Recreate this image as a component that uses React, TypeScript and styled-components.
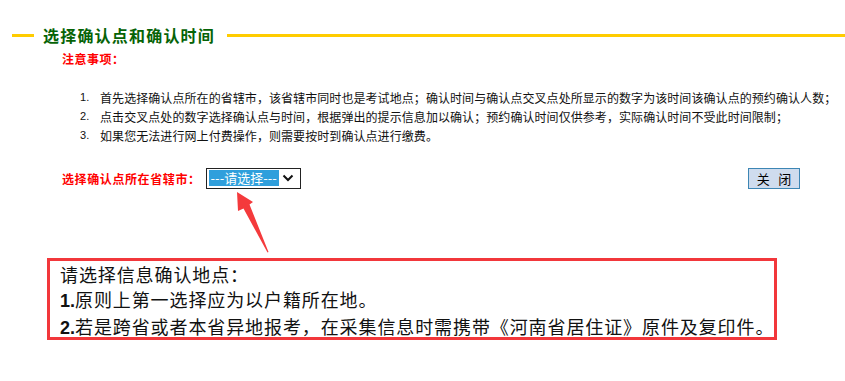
import React from "react";
import styled, { createGlobalStyle } from "styled-components";

const Global = createGlobalStyle`
  html, body { margin: 0; padding: 0; background: #fff; }
  body { font-family: "Noto Sans CJK SC", "Liberation Sans", sans-serif; color: #000; }
`;

const Page = styled.div`
  width: 845px;
  height: 381px;
  overflow: hidden;
  display: flex;
  flex-direction: column;
`;

const Header = styled.div`
  display: flex;
  align-items: center;
  height: 18px;
  margin-top: 26px;
`;

const Rule = styled.div<{ $w?: number }>`
  height: 3px;
  background: #ffcc00;
  ${(p) => (p.$w ? `width: ${p.$w}px;` : "flex: 1;")}
`;

const Title = styled.h2`
  margin: 0 12px 0 9px;
  font-size: 16px;
  line-height: 18px;
  font-weight: bold;
  letter-spacing: 1.2px;
  color: #066306;
`;

const Notice = styled.div`
  margin: 7px 0 0 62px;
  font-size: 12px;
  line-height: 16px;
  font-weight: bold;
  color: #f00;
  letter-spacing: 0.5px;
`;

const List = styled.ol`
  margin: 21px 0 0 0;
  padding: 0 0 0 80px;
  list-style: none;
  display: flex;
  flex-direction: column;
`;

const Item = styled.li`
  display: flex;
  align-items: center;
  height: 19px;
  font-size: 12px;
  line-height: 19px;
  letter-spacing: 0.07px;
  color: #111;
  white-space: nowrap;
`;

const Num = styled.span`
  flex-shrink: 0;
  width: 20px;
  font-family: "Liberation Sans", sans-serif;
  font-size: 11px;
  line-height: 19px;
  letter-spacing: 0;
`;

const ChooseRow = styled.div`
  display: flex;
  align-items: center;
  margin: 22px 0 0 62px;
  height: 22px;
`;

const Label = styled.span`
  font-size: 12px;
  font-weight: bold;
  color: #f00;
  letter-spacing: 0.6px;
`;

const FakeSelect = styled.div`
  margin-left: 5px;
  width: 89px;
  height: 19px;
  border: 1px solid #222;
  display: flex;
  align-items: center;
  padding: 0 2px;
  box-sizing: content-box;
  gap: 3px;
`;

const Highlight = styled.span`
  background: #2f9fdc;
  color: #fff;
  font-size: 13px;
  line-height: 16px;
  height: 16px;
  padding: 0 2px;
  white-space: nowrap;
`;

const CloseBtn = styled.button`
  margin-left: auto;
  margin-right: 45px;
  width: 52px;
  height: 21px;
  background: #cfdcee;
  border: 1px solid #3d86b4;
  font-family: "Noto Sans CJK SC", sans-serif;
  font-size: 13px;
  line-height: 17px;
  padding: 0;
  color: #000;
  white-space: pre;
`;

const ArrowWrap = styled.svg`
  display: block;
  margin-left: 230px;
  margin-top: 2px;
`;

const InfoBox = styled.div`
  margin: 0 0 0 47px;
  width: 714px;
  height: 75px;
  border: 3px solid #f2373b;
  padding: 1px 0 0 10px;
  box-sizing: content-box;
  display: flex;
  flex-direction: column;
`;

const InfoLine = styled.div`
  font-size: 18px;
  line-height: 25px;
  color: #111;
  white-space: nowrap;
  letter-spacing: 0.9px;
`;

const Bold = styled.b`
  font-family: "Liberation Sans", sans-serif;
  font-weight: bold;
  letter-spacing: 0;
`;

const items = [
  "首先选择确认点所在的省辖市，该省辖市同时也是考试地点；确认时间与确认点交叉点处所显示的数字为该时间该确认点的预约确认人数；",
  "点击交叉点处的数字选择确认点与时间，根据弹出的提示信息加以确认；预约确认时间仅供参考，实际确认时间不受此时间限制；",
  "如果您无法进行网上付费操作，则需要按时到确认点进行缴费。",
];

export default function App() {
  return (
    <Page>
      <Global />
      <Header>
        <Rule $w={22} style={{ marginLeft: 12 }} />
        <Title>选择确认点和确认时间</Title>
        <Rule />
      </Header>
      <Notice>注意事项：</Notice>
      <List>
        {items.map((t, i) => (
          <Item key={i}>
            <Num>{i + 1}.</Num>
            {t}
          </Item>
        ))}
      </List>
      <ChooseRow>
        <Label>选择确认点所在省辖市：</Label>
        <FakeSelect>
          <Highlight>---请选择---</Highlight>
          <svg width="12" height="10" viewBox="0 0 12 10">
            <path d="M1.5 2.5 L6 7 L10.5 2.5" fill="none" stroke="#111" strokeWidth="2" />
          </svg>
        </FakeSelect>
        <CloseBtn>{"关   闭"}</CloseBtn>
      </ChooseRow>
      <ArrowWrap width="45" height="67" viewBox="0 0 45 67">
        <polygon points="7,1 23,11 19.5,13.5 38.5,61 37.5,61.5 13.5,17.5 8,20" fill="#f43a3c" />
      </ArrowWrap>
      <InfoBox>
        <InfoLine>请选择信息确认地点：</InfoLine>
        <InfoLine>
          <Bold>1.</Bold>原则上第一选择应为以户籍所在地。
        </InfoLine>
        <InfoLine>
          <Bold>2.</Bold>若是跨省或者本省异地报考，在采集信息时需携带《河南省居住证》原件及复印件。
        </InfoLine>
      </InfoBox>
    </Page>
  );
}
